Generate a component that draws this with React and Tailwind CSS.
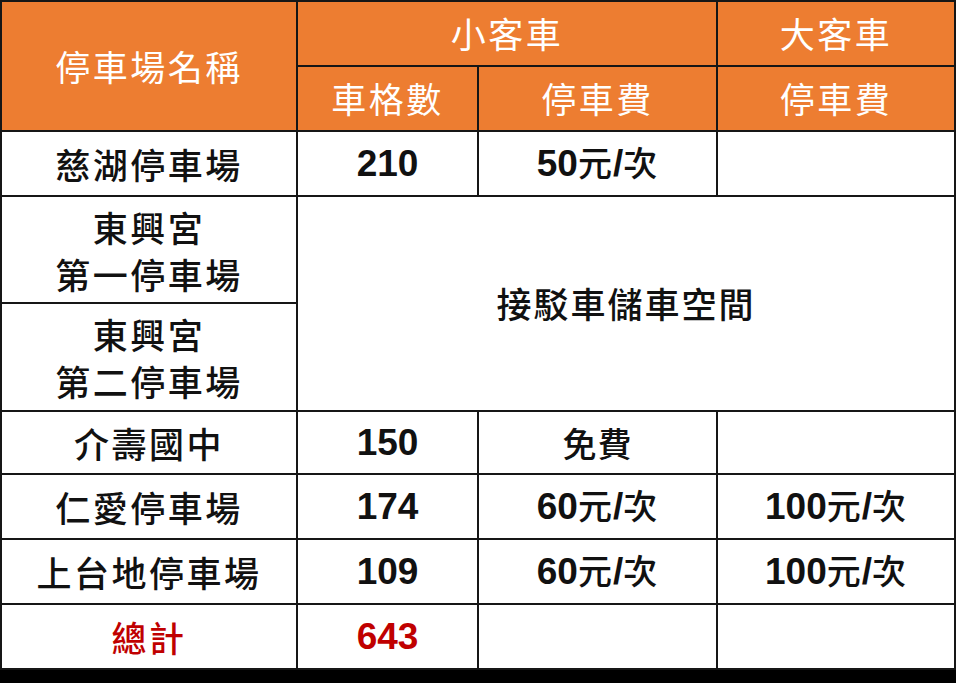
const rows = [
    { name: ['慈湖停車場'], spaces: '210', fee: '50元/次', bigFee: '', h: 'h-[65px]' },
    { name: ['東興宮', '第一停車場'], shuttle: true, h: 'h-[107px]' },
    { name: ['東興宮', '第二停車場'], skip: true, h: 'h-[108px]' },
    { name: ['介壽國中'], spaces: '150', fee: '免費', bigFee: '', h: 'h-[63px]' },
    { name: ['仁愛停車場'], spaces: '174', fee: '60元/次', bigFee: '100元/次', h: 'h-[65px]' },
    { name: ['上台地停車場'], spaces: '109', fee: '60元/次', bigFee: '100元/次', h: 'h-[65px]' },
]

const cjk = "font-['Noto_Sans_CJK_TC',sans-serif]"
const cell = 'border-2 border-[#161616] text-center align-middle p-0'
const head = `${cell} bg-[#ed7d31] text-white text-[35px] tracking-[2.5px] font-normal ${cjk}`
const nameCell = `${cell} text-[35px] leading-[47px] tracking-[2.5px] font-medium ${cjk}`

// digits and slashes in bold Arial-like face, CJK in the sans CJK face
function Mixed({ text }) {
    const parts = text.match(/[0-9/]+|[^0-9/]+/g) || []
    return parts.map((p, i) =>
        /[0-9/]/.test(p) ? (
            <span
                key={i}
                className="font-['Liberation_Sans',sans-serif] font-bold text-[37px]"
            >
                {p}
            </span>
        ) : (
            <span key={i} className={`${cjk} font-medium text-[34px] tracking-[1px]`}>
                {p}
            </span>
        )
    )
}

export default function App() {
    return (
        <div className="w-[956px] h-[683px] bg-black overflow-hidden">
            <table className="border-collapse bg-white w-[954px] table-fixed">
                <colgroup>
                    <col className="w-[296px]" />
                    <col className="w-[181px]" />
                    <col className="w-[239px]" />
                    <col className="w-[238px]" />
                </colgroup>
                <thead>
                    <tr className="h-[65px]">
                        <th rowSpan={2} className={head}>
                            停車場名稱
                        </th>
                        <th colSpan={2} className={head}>
                            小客車
                        </th>
                        <th className={head}>大客車</th>
                    </tr>
                    <tr className="h-[65px]">
                        <th className={head}>車格數</th>
                        <th className={head}>停車費</th>
                        <th className={head}>停車費</th>
                    </tr>
                </thead>
                <tbody className="text-[#111]">
                    {rows.map((row, i) => (
                        <tr key={i} className={row.h}>
                            <td className={nameCell}>
                                {row.name.map(line => (
                                    <div key={line}>{line}</div>
                                ))}
                            </td>
                            {row.shuttle ? (
                                <td
                                    colSpan={3}
                                    rowSpan={2}
                                    className={`${cell} text-[35px] tracking-[2px] font-medium ${cjk}`}
                                >
                                    接駁車儲車空間
                                </td>
                            ) : row.skip ? null : (
                                <>
                                    <td className={cell}>
                                        <Mixed text={row.spaces} />
                                    </td>
                                    <td className={cell}>
                                        <Mixed text={row.fee} />
                                    </td>
                                    <td className={cell}>
                                        <Mixed text={row.bigFee} />
                                    </td>
                                </>
                            )}
                        </tr>
                    ))}
                    <tr className="h-[65px] text-[#c00000]">
                        <td className={nameCell}>總計</td>
                        <td className={cell}>
                            <Mixed text="643" />
                        </td>
                        <td className={cell}></td>
                        <td className={cell}></td>
                    </tr>
                </tbody>
            </table>
        </div>
    )
}
